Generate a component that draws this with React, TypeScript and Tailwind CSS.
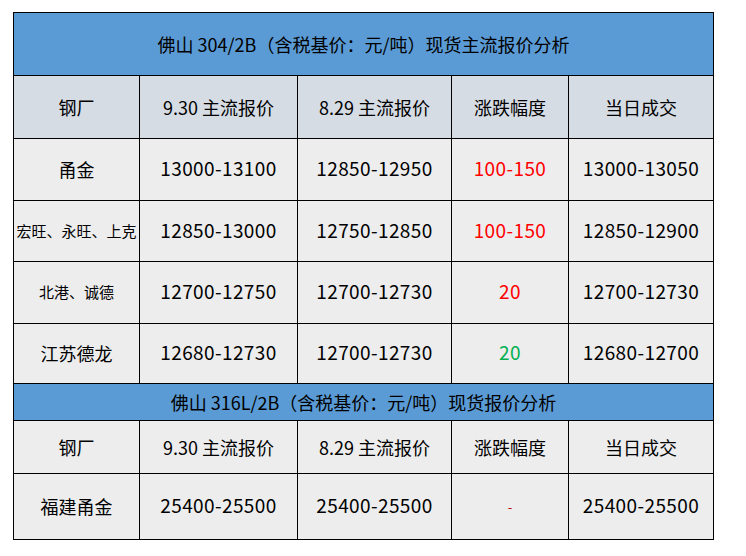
const font = { fontFamily: '"Microsoft YaHei", "Noto Sans CJK SC", "Noto Sans", sans-serif' };

type Cell = { text: string; tone?: "red" | "green" | "dash"; small?: boolean; num?: boolean };

const widths = ["w-[126px]", "w-[158px]", "w-[154px]", "w-[117px]", "w-[145px]"];

const headerCells: Cell[] = [
  { text: "钢厂" },
  { text: "9.30 主流报价" },
  { text: "8.29 主流报价" },
  { text: "涨跌幅度" },
  { text: "当日成交" },
];

const section1: { h: string; cells: Cell[] }[] = [
  {
    h: "h-[62px]",
    cells: [
      { text: "甬金" },
      { text: "13000-13100", num: true },
      { text: "12850-12950", num: true },
      { text: "100-150", tone: "red", num: true },
      { text: "13000-13050", num: true },
    ],
  },
  {
    h: "h-[61px]",
    cells: [
      { text: "宏旺、永旺、上克", small: true },
      { text: "12850-13000", num: true },
      { text: "12750-12850", num: true },
      { text: "100-150", tone: "red", num: true },
      { text: "12850-12900", num: true },
    ],
  },
  {
    h: "h-[62px]",
    cells: [
      { text: "北港、诚德", small: true },
      { text: "12700-12750", num: true },
      { text: "12700-12730", num: true },
      { text: "20", tone: "red", num: true },
      { text: "12700-12730", num: true },
    ],
  },
  {
    h: "h-[60px]",
    cells: [
      { text: "江苏德龙" },
      { text: "12680-12730", num: true },
      { text: "12700-12730", num: true },
      { text: "20", tone: "green", num: true },
      { text: "12680-12700", num: true },
    ],
  },
];

const section2: Cell[] = [
  { text: "福建甬金" },
  { text: "25400-25500", num: true },
  { text: "25400-25500", num: true },
  { text: "-", tone: "dash" },
  { text: "25400-25500", num: true },
];

function Row({ cells, h, bg }: { cells: Cell[]; h: string; bg: string }) {
  return (
    <div className={`flex ${h}`}>
      {cells.map((c, i) => {
        const tone =
          c.tone === "red"
            ? "text-[#ff0000]"
            : c.tone === "green"
              ? "text-[#00b050]"
              : c.tone === "dash"
                ? "text-[#c00000] text-[13px]"
                : "text-black";
        const size = c.small
          ? "text-[15px]"
          : c.num
            ? "text-[19px] tracking-[0.4px] pb-[2px]"
            : c.tone === "dash"
              ? ""
              : "text-[18px]";
        return (
          <div
            key={i}
            className={`${widths[i]} ${bg} ${tone} ${size} flex shrink-0 items-center justify-center whitespace-nowrap border-r border-b border-black`}
          >
            {c.text}
          </div>
        );
      })}
    </div>
  );
}

export default function App() {
  return (
    <div className="h-[556px] w-[746px] bg-white pl-[13px] pt-[12px]" style={font}>
      <div className="w-[701px] border-l border-t border-black">
        <div className="flex h-[63px] items-center justify-center border-r border-b border-black bg-[#5b9bd5] text-[18px] text-black">
          佛山 304/2B（含税基价：元/吨）现货主流报价分析
        </div>
        <Row cells={headerCells} h="h-[63px]" bg="bg-[#d6dce4]" />
        {section1.map((r, i) => (
          <Row key={i} cells={r.cells} h={r.h} bg="bg-[#ededed]" />
        ))}
        <div className="flex h-[37px] items-center justify-center border-r border-b border-black bg-[#5b9bd5] text-[18px] text-black">
          佛山 316L/2B（含税基价：元/吨）现货报价分析
        </div>
        <Row cells={headerCells} h="h-[53px]" bg="bg-[#ededed]" />
        <Row cells={section2} h="h-[66px]" bg="bg-[#ededed]" />
      </div>
    </div>
  );
}
